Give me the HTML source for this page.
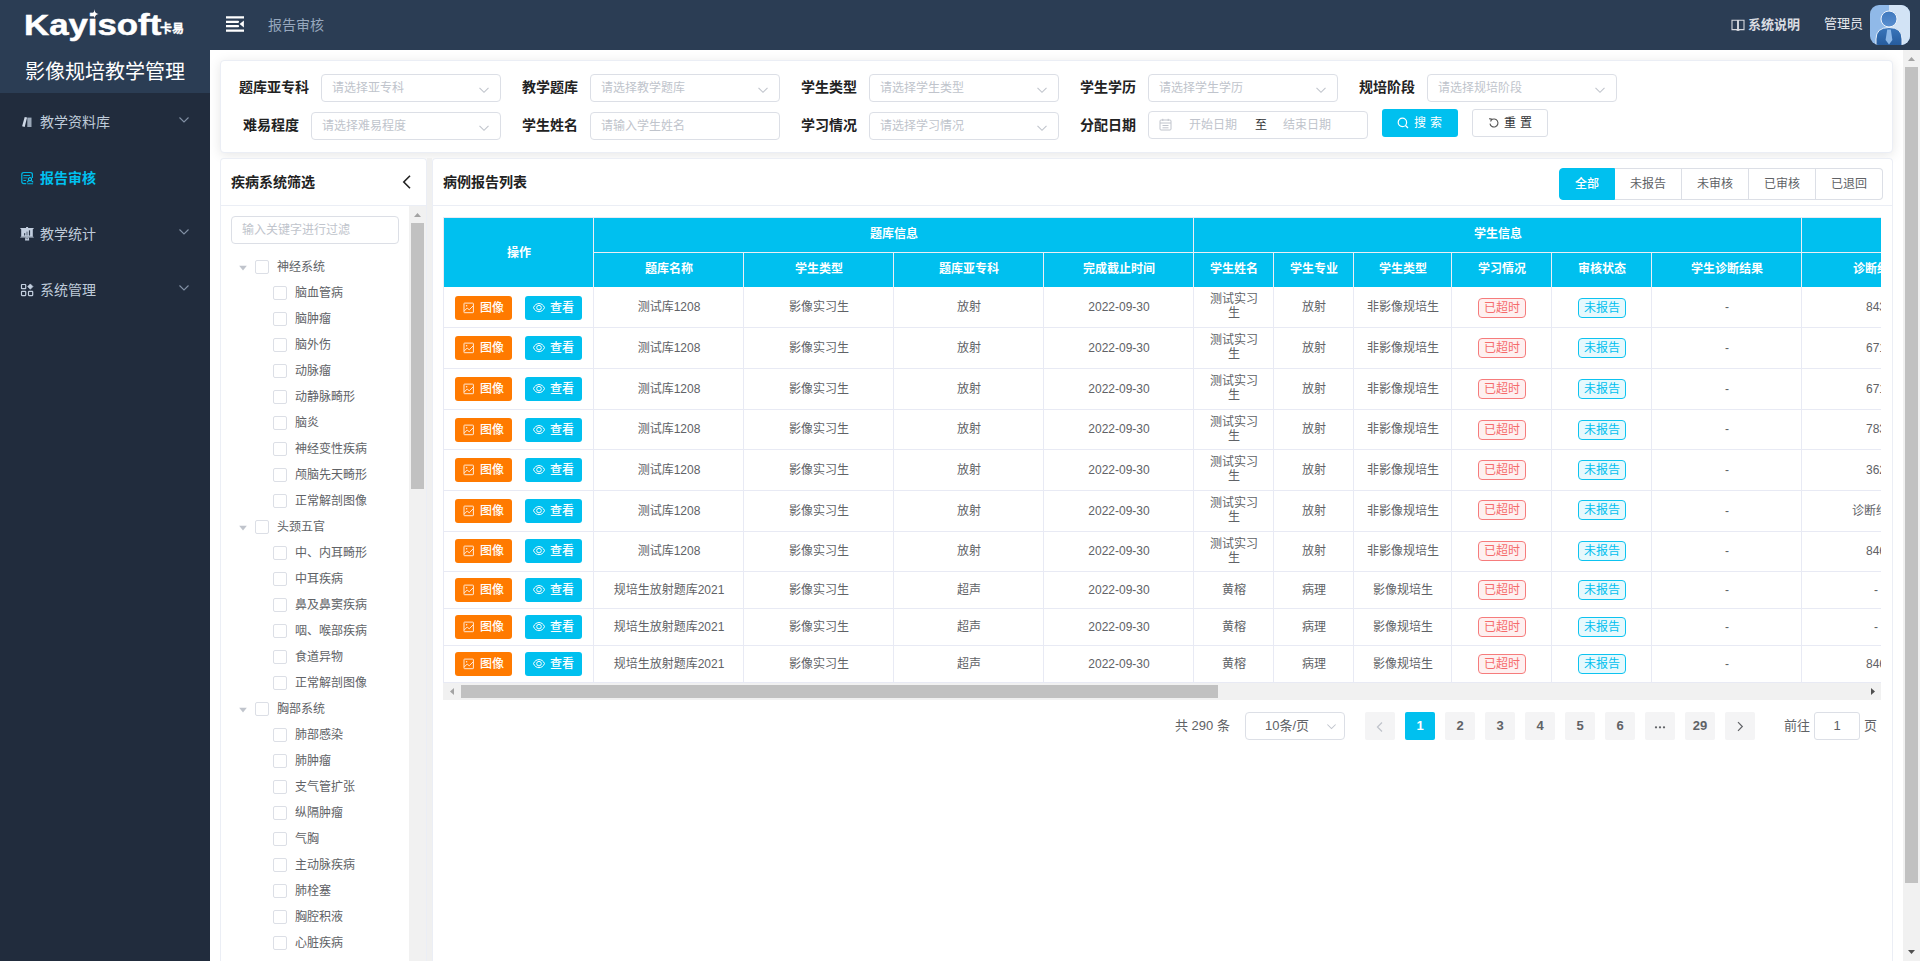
<!DOCTYPE html><html lang="zh-CN"><head><meta charset="utf-8"><title>报告审核</title><style>
*{box-sizing:border-box;margin:0;padding:0}
html,body{width:1920px;height:961px;overflow:hidden;background:#fff}
body{font-family:"Liberation Sans","Noto Sans CJK SC",sans-serif;font-size:12px;color:#606266;position:relative;-webkit-font-smoothing:antialiased}
.abs{position:absolute}
#sidebar{position:absolute;left:0;top:0;width:210px;height:961px;background:#212c3d}
#logo{position:absolute;left:0;top:0;width:210px;height:93px;background:#2b3d54}
#logo .brand{position:absolute;left:24px;top:7px;font-weight:bold;font-size:30px;line-height:36px;color:#fff;white-space:nowrap;transform:scaleX(1.16);transform-origin:0 50%;-webkit-text-stroke:.5px #fff;font-style:normal}
#logo .cn{position:absolute;left:160px;top:20px;font-size:12px;line-height:18px;font-weight:bold;color:#fff;white-space:nowrap;-webkit-text-stroke:.3px #fff}
#logo .star{position:absolute;left:89.5px;top:9px;width:9px;height:10px}
#logo .title{position:absolute;left:25px;top:57px;font-size:20px;line-height:30px;color:#fff;white-space:nowrap;letter-spacing:0}
.mi{position:absolute;left:0;width:210px;height:56px;line-height:56px;color:#bfcbd9;font-size:14px}
.mi .ic{position:absolute;left:20px;top:21px;width:14px;height:14px;line-height:0;display:block}
.mi .ic svg{display:block}
.mi .tx{position:absolute;left:40px;top:0;white-space:nowrap}
.mi .ar{position:absolute;left:178px;top:20px;width:12px;height:12px}
.mi.act{color:#00c0ef;font-weight:bold}
#header{position:absolute;left:210px;top:0;width:1710px;height:50px;background:#2b3d54}
#main{position:absolute;left:210px;top:50px;width:1693px;height:911px;background:#fff;overflow:hidden}
.card{position:absolute;background:#fff;border:1px solid #ebeef5;border-radius:4px;box-shadow:0 2px 12px 0 rgba(0,0,0,.1)}
.card.ns{box-shadow:none}
.lbl{position:absolute;font-size:14px;font-weight:bold;color:#222;line-height:28px;white-space:nowrap}
.sel{position:absolute;height:28px;border:1px solid #dcdfe6;border-radius:4px;background:#fff;font-size:12px;line-height:26px;color:#c0c4cc;padding-left:10px;white-space:nowrap}
.sel svg{position:absolute;right:10px;top:9px;width:12px;height:12px}

.tn{position:absolute;left:0;width:200px;height:26px;line-height:26px;font-size:12px;color:#606266;white-space:nowrap}
.tn span{position:absolute;top:0.6px}
.tn .cb{position:absolute;top:7px;width:14px;height:14px;border:1px solid #dcdfe6;border-radius:2px;background:#fff}
.tn .ca{position:absolute;left:28px;top:10px;width:10px;height:10px}

.rg{position:absolute;left:0;top:118px;height:32px}
.rb{position:absolute;top:0;height:32px;line-height:30px;text-align:center;font-size:12px;color:#606266;background:#fff;border:1px solid #dcdfe6;border-left:none;white-space:nowrap}
.rb.on{background:#00c0ef;border-color:#00c0ef;color:#fff;font-weight:500;border-radius:4px 0 0 4px;border-left:1px solid #00c0ef}
.rb:last-child{border-radius:0 4px 4px 0}
.tbl{position:absolute;overflow:hidden;font-size:12px;color:#606266}
.th-bg{position:absolute;left:1px;top:1px;width:1500px;height:69px;background:#00c0ef}
.hc{position:absolute;text-align:center;color:#fff;font-weight:bold;font-size:12px;white-space:nowrap;overflow:hidden}
.hl{position:absolute;background:#ebeef5}
.vl{position:absolute;width:1px;background:#e8eaf4}
.tr{position:absolute;left:0;width:1600px;border-bottom:1px solid #e8eaf4}
.td{position:absolute;top:-0.4px;text-align:center;white-space:nowrap;overflow:hidden}
.tr.s .td{top:0}
.td.two{line-height:14.6px!important;padding-top:5.1px;white-space:normal}
.bt{position:absolute;width:57px;height:24px;border-radius:3px;color:#fff;line-height:24px;font-size:12px;white-space:nowrap}
.bt svg{position:absolute;left:8px;top:6px;width:12px;height:12px}
.bt span{position:absolute;left:25px;top:0;font-weight:500}
.bt.o{background:#ff7a00}
.bt.b{background:#00c0ef}
.tg{position:absolute;width:48px;height:20px;line-height:18px;text-align:center;border:1px solid;border-radius:4px;font-size:12px;white-space:nowrap}
.tg.d{color:#f56c6c;border-color:#f67c7c;background:#fef0f0}
.tg.p{color:#00c0ef;border-color:#0dc3f0;background:#e6f9fd}
.pb{position:absolute;top:662px;width:30px;height:28px;line-height:28px;text-align:center;background:#f4f4f5;border-radius:2px;color:#606266;font-weight:bold;font-size:13px}
.pb.on{background:#00c0ef;color:#fff}
.pb svg{vertical-align:middle;position:relative;top:0.2px}
</style></head><body>
<div id="sidebar"><div id="logo"><div class="brand">Kayisoft</div><div class="cn">卡易</div><svg class="star" viewBox="0 0 11 13"><path d="M5.5 0 C5.9 4 6.6 5.6 11 6.5 C6.6 7.4 5.9 9 5.5 13 C5.1 9 4.4 7.4 0 6.5 C4.4 5.6 5.1 4 5.5 0 Z" fill="#fff"/></svg><div class="title">影像规培教学管理</div></div>
<div class="mi" style="top:94px"><span class="ic"><svg viewBox="0 0 14 14" width="14" height="14"><path d="M4.7 1.9 L7.1 2.6 L4.7 12 L2.1 11.2 Z" fill="#d0dae8"/><rect x="7.3" y="2.6" width="4.2" height="9.4" fill="#9aa7b8"/></svg></span><span class="tx">教学资料库</span><svg class="ar" viewBox="0 0 12 12"><path d="M1.5 3.5 L6 8 L10.5 3.5" fill="none" stroke="#8391a5" stroke-width="1.1"/></svg></div>
<div class="mi act" style="top:150px"><span class="ic"><svg viewBox="0 0 14 14" width="14" height="14"><path d="M12.4 6.4 V3.6 Q12.4 1.5 10.3 1.5 H3.9 Q1.8 1.5 1.8 3.6 V10.5 Q1.8 12.6 3.9 12.6 H5.8" fill="none" stroke="#00b4e0" stroke-width="1.2" stroke-linecap="round"/><path d="M3.8 4.5 H9.6 M3.8 9.5 H5.6" stroke="#00b4e0" stroke-width="1.1" fill="none" stroke-linecap="round"/><path d="M3.8 6.9 H7" stroke="#0a7fa3" stroke-width="1.3" fill="none" stroke-linecap="round"/><circle cx="10" cy="8.2" r="1.6" fill="none" stroke="#00c8f5" stroke-width="1.1"/><path d="M7.4 11 Q7.9 9.6 9.2 9.7 M12.8 11 Q12.3 9.6 10.8 9.7" fill="none" stroke="#00c8f5" stroke-width="1.1" stroke-linecap="round"/><path d="M7.8 12.7 H12.6" stroke="#00b4e0" stroke-width="1.1" stroke-linecap="round"/></svg></span><span class="tx">报告审核</span></div>
<div class="mi" style="top:206px"><span class="ic"><svg viewBox="0 0 14 14" width="14" height="14"><rect x="6" y="-0.2" width="2.2" height="1.6" rx=".8" fill="#c3cfdf"/><path d="M0 1 H14 L13 2.2 H1 Z" fill="#c3cfdf"/><rect x="1.2" y="1.6" width="11.6" height="8" fill="#c3cfdf"/><path d="M1 9.4 H13 L14 10.6 H0 Z" fill="#c3cfdf"/><rect x="4" y="6" width="1.2" height="2.4" rx=".5" fill="#3a475a"/><rect x="6.4" y="4.6" width="1.2" height="3.8" rx=".5" fill="#6b788b"/><rect x="8.9" y="3.2" width="1.2" height="5.2" rx=".5" fill="#2a3647"/><path d="M5.4 10.6 H8.8 L9.2 13.6 H5 Z" fill="#c3cfdf"/><path d="M6.2 11.3 H8 L7.1 12.6 Z" fill="#3a475a"/></svg></span><span class="tx">教学统计</span><svg class="ar" viewBox="0 0 12 12"><path d="M1.5 3.5 L6 8 L10.5 3.5" fill="none" stroke="#8391a5" stroke-width="1.1"/></svg></div>
<div class="mi" style="top:262px"><span class="ic"><svg viewBox="0 0 14 14" width="14" height="14"><rect x="1.5" y="1.5" width="4.2" height="4.2" rx=".5" fill="none" stroke="#c3cfdf" stroke-width="1.2"/><rect x="1.5" y="8.4" width="4.2" height="4.2" rx=".5" fill="none" stroke="#c3cfdf" stroke-width="1.2"/><rect x="8.5" y="8.4" width="4.2" height="4.2" rx=".5" fill="none" stroke="#c3cfdf" stroke-width="1.2"/><path d="M10.3 0.9 L13 3.6 L10.3 6.3 L7.6 3.6 Z" fill="#c3cfdf" stroke="#c3cfdf" stroke-width=".6" stroke-linejoin="round"/></svg></span><span class="tx">系统管理</span><svg class="ar" viewBox="0 0 12 12"><path d="M1.5 3.5 L6 8 L10.5 3.5" fill="none" stroke="#8391a5" stroke-width="1.1"/></svg></div>
</div>
<div id="header"><svg class="abs" style="left:16px;top:16px" width="18" height="16" viewBox="0 0 18 16"><path d="M0.3 1.4 H17.9 M0.3 5.8 H12 M0.3 10.2 H12 M0.3 14.6 H17.9" stroke="#fff" stroke-width="2.2" fill="none" stroke-linecap="round"/><path d="M17.9 4.6 L13.6 8 L17.9 11.4 Z" fill="#fff"/></svg><div class="abs" style="left:58px;top:0;line-height:50px;font-size:14px;color:#97a8be;white-space:nowrap">报告审核</div><svg class="abs" style="left:1521px;top:18px" width="14" height="14" viewBox="0 0 14 14"><path d="M1 2.2 H6.6 V11.6 H1 Z M7.4 2.2 H13 V11.6 H7.4 Z" fill="none" stroke="#d6d9de" stroke-width="1.1"/><path d="M5.6 12.4 H8.4" stroke="#d6d9de" stroke-width="1"/></svg><div class="abs" style="left:1538px;top:0;line-height:50px;font-size:13px;font-weight:bold;color:#d9dce1;white-space:nowrap">系统说明</div><div class="abs" style="left:1614px;top:0;line-height:48px;font-size:13px;color:#e8eaee;white-space:nowrap">管理员</div><svg class="abs" style="left:1660px;top:5px" width="40" height="40" viewBox="0 0 40 40"><defs><clipPath id="avc"><rect x="0" y="0" width="40" height="40" rx="9" ry="9"/></clipPath><linearGradient id="avh" x1="0" y1="0" x2="0" y2="1"><stop offset="0" stop-color="#3f78bd"/><stop offset="1" stop-color="#5a8fd0"/></linearGradient><linearGradient id="avb" x1="0" y1="0" x2="0" y2="1"><stop offset="0" stop-color="#3a76bb"/><stop offset="1" stop-color="#255a9c"/></linearGradient></defs><g clip-path="url(#avc)"><rect width="40" height="40" fill="#90b9e8"/><rect x="19" width="21" height="40" fill="#d2e3f5"/><path d="M6 41 V34 Q6 22.5 19 22.5 Q32 22.5 32 34 V41 Z" fill="url(#avb)" stroke="#e8f0fa" stroke-width="1"/><path d="M17.2 24.5 H20.8 L22.4 35 L19 39.5 L15.6 35 Z" fill="#8db8e8"/><circle cx="19" cy="14" r="8" fill="url(#avh)" stroke="#eef4fb" stroke-width="1"/></g></svg></div>
<div id="main"><div class="card" style="left:10px;top:10px;width:1673px;height:93px"></div><div class="lbl" style="left:29px;top:23px">题库亚专科</div><div class="sel" style="left:111px;top:24px;width:180px">请选择亚专科<svg viewBox="0 0 12 12"><path d="M1.5 3.8 L6 8.3 L10.5 3.8" fill="none" stroke="#c0c4cc" stroke-width="1.1"/></svg></div><div class="lbl" style="left:312px;top:23px">教学题库</div><div class="sel" style="left:380px;top:24px;width:190px">请选择教学题库<svg viewBox="0 0 12 12"><path d="M1.5 3.8 L6 8.3 L10.5 3.8" fill="none" stroke="#c0c4cc" stroke-width="1.1"/></svg></div><div class="lbl" style="left:591px;top:23px">学生类型</div><div class="sel" style="left:659px;top:24px;width:190px">请选择学生类型<svg viewBox="0 0 12 12"><path d="M1.5 3.8 L6 8.3 L10.5 3.8" fill="none" stroke="#c0c4cc" stroke-width="1.1"/></svg></div><div class="lbl" style="left:870px;top:23px">学生学历</div><div class="sel" style="left:938px;top:24px;width:190px">请选择学生学历<svg viewBox="0 0 12 12"><path d="M1.5 3.8 L6 8.3 L10.5 3.8" fill="none" stroke="#c0c4cc" stroke-width="1.1"/></svg></div><div class="lbl" style="left:1149px;top:23px">规培阶段</div><div class="sel" style="left:1217px;top:24px;width:190px">请选择规培阶段<svg viewBox="0 0 12 12"><path d="M1.5 3.8 L6 8.3 L10.5 3.8" fill="none" stroke="#c0c4cc" stroke-width="1.1"/></svg></div><div class="lbl" style="left:33px;top:61px">难易程度</div><div class="sel" style="left:101px;top:62px;width:190px">请选择难易程度<svg viewBox="0 0 12 12"><path d="M1.5 3.8 L6 8.3 L10.5 3.8" fill="none" stroke="#c0c4cc" stroke-width="1.1"/></svg></div><div class="lbl" style="left:312px;top:61px">学生姓名</div><div class="sel" style="left:380px;top:62px;width:190px">请输入学生姓名</div><div class="lbl" style="left:591px;top:61px">学习情况</div><div class="sel" style="left:659px;top:62px;width:190px">请选择学习情况<svg viewBox="0 0 12 12"><path d="M1.5 3.8 L6 8.3 L10.5 3.8" fill="none" stroke="#c0c4cc" stroke-width="1.1"/></svg></div><div class="lbl" style="left:870px;top:61px">分配日期</div><div class="sel" style="left:938px;top:61px;width:220px;padding-left:0"><svg style="left:10px;top:6px;right:auto;width:13px;height:13px" viewBox="0 0 13 13"><rect x="1" y="2" width="11" height="10" rx="1" fill="none" stroke="#c0c4cc" stroke-width="1"/><path d="M1 5 H12 M3.8 0.8 V3 M9.2 0.8 V3 M3.5 7.5 H9.5 M3.5 9.8 H9.5" stroke="#c0c4cc" stroke-width="1" fill="none"/></svg><span class="abs" style="left:40px;top:0">开始日期</span><span class="abs" style="left:106px;top:0;color:#303133">至</span><span class="abs" style="left:134px;top:0">结束日期</span></div><div class="abs" style="left:1172px;top:59px;width:76px;height:28px;background:#00c0ef;border-radius:3px;color:#fff;font-size:12px;line-height:28px;white-space:nowrap"><svg class="abs" style="left:15px;top:8px" width="12" height="12" viewBox="0 0 12 12"><circle cx="5.4" cy="5.4" r="4.2" fill="none" stroke="#fff" stroke-width="1.2"/><path d="M8.5 8.5 L11 11" stroke="#fff" stroke-width="1.2"/></svg><span class="abs" style="left:32px;top:0;letter-spacing:4px">搜索</span></div><div class="abs" style="left:1262px;top:59px;width:76px;height:28px;background:#fff;border:1px solid #dcdfe6;border-radius:3px;color:#303133;font-size:12px;line-height:26px;white-space:nowrap"><svg class="abs" style="left:15px;top:7px" width="12" height="12" viewBox="0 0 12 12"><path d="M3.1 3.2 A4 4 0 1 1 2 6.6" fill="none" stroke="#555" stroke-width="1.1"/><path d="M1.2 1.6 L3.6 2.2 L2.6 4.4" fill="none" stroke="#555" stroke-width="1.1"/></svg><span class="abs" style="left:31px;top:0;letter-spacing:4px">重置</span></div><div class="abs" style="left:217px;top:108px;width:5px;height:820px;background:#f0f0f0"></div><div class="card ns" style="left:10px;top:108px;width:207px;height:820px;border-bottom:none;border-radius:4px 4px 0 0"></div><div class="abs" style="left:21px;top:109px;line-height:46px;font-size:14px;font-weight:bold;color:#222;white-space:nowrap">疾病系统筛选</div><svg class="abs" style="left:190px;top:124px" width="14" height="16" viewBox="0 0 14 16"><path d="M10 1.8 L3.8 8 L10 14.2" fill="none" stroke="#222" stroke-width="1.6"/></svg><div class="abs" style="left:10px;top:155px;width:207px;height:1px;background:#ebeef5"></div><div class="sel" style="left:21px;top:166px;width:168px">输入关键字进行过滤</div><div class="tree"><div class="tn" style="top:203px"><svg class="ca" viewBox="0 0 10 10"><path d="M1.2 2.8 H8.8 L5 7.6 Z" fill="#c0c4cc"/></svg><i class="cb" style="left:45px"></i><span style="left:67px">神经系统</span></div><div class="tn" style="top:229px"><i class="cb" style="left:63px"></i><span style="left:85px">脑血管病</span></div><div class="tn" style="top:255px"><i class="cb" style="left:63px"></i><span style="left:85px">脑肿瘤</span></div><div class="tn" style="top:281px"><i class="cb" style="left:63px"></i><span style="left:85px">脑外伤</span></div><div class="tn" style="top:307px"><i class="cb" style="left:63px"></i><span style="left:85px">动脉瘤</span></div><div class="tn" style="top:333px"><i class="cb" style="left:63px"></i><span style="left:85px">动静脉畸形</span></div><div class="tn" style="top:359px"><i class="cb" style="left:63px"></i><span style="left:85px">脑炎</span></div><div class="tn" style="top:385px"><i class="cb" style="left:63px"></i><span style="left:85px">神经变性疾病</span></div><div class="tn" style="top:411px"><i class="cb" style="left:63px"></i><span style="left:85px">颅脑先天畸形</span></div><div class="tn" style="top:437px"><i class="cb" style="left:63px"></i><span style="left:85px">正常解剖图像</span></div><div class="tn" style="top:463px"><svg class="ca" viewBox="0 0 10 10"><path d="M1.2 2.8 H8.8 L5 7.6 Z" fill="#c0c4cc"/></svg><i class="cb" style="left:45px"></i><span style="left:67px">头颈五官</span></div><div class="tn" style="top:489px"><i class="cb" style="left:63px"></i><span style="left:85px">中、内耳畸形</span></div><div class="tn" style="top:515px"><i class="cb" style="left:63px"></i><span style="left:85px">中耳疾病</span></div><div class="tn" style="top:541px"><i class="cb" style="left:63px"></i><span style="left:85px">鼻及鼻窦疾病</span></div><div class="tn" style="top:567px"><i class="cb" style="left:63px"></i><span style="left:85px">咽、喉部疾病</span></div><div class="tn" style="top:593px"><i class="cb" style="left:63px"></i><span style="left:85px">食道异物</span></div><div class="tn" style="top:619px"><i class="cb" style="left:63px"></i><span style="left:85px">正常解剖图像</span></div><div class="tn" style="top:645px"><svg class="ca" viewBox="0 0 10 10"><path d="M1.2 2.8 H8.8 L5 7.6 Z" fill="#c0c4cc"/></svg><i class="cb" style="left:45px"></i><span style="left:67px">胸部系统</span></div><div class="tn" style="top:671px"><i class="cb" style="left:63px"></i><span style="left:85px">肺部感染</span></div><div class="tn" style="top:697px"><i class="cb" style="left:63px"></i><span style="left:85px">肺肿瘤</span></div><div class="tn" style="top:723px"><i class="cb" style="left:63px"></i><span style="left:85px">支气管扩张</span></div><div class="tn" style="top:749px"><i class="cb" style="left:63px"></i><span style="left:85px">纵隔肿瘤</span></div><div class="tn" style="top:775px"><i class="cb" style="left:63px"></i><span style="left:85px">气胸</span></div><div class="tn" style="top:801px"><i class="cb" style="left:63px"></i><span style="left:85px">主动脉疾病</span></div><div class="tn" style="top:827px"><i class="cb" style="left:63px"></i><span style="left:85px">肺栓塞</span></div><div class="tn" style="top:853px"><i class="cb" style="left:63px"></i><span style="left:85px">胸腔积液</span></div><div class="tn" style="top:879px"><i class="cb" style="left:63px"></i><span style="left:85px">心脏疾病</span></div></div><div class="abs" style="left:199px;top:156px;width:17px;height:760px;background:#f1f1f1"></div><div class="abs" style="left:201px;top:173px;width:13px;height:266px;background:#c1c1c1"></div><svg class="abs" style="left:203px;top:162px" width="9" height="6" viewBox="0 0 9 6"><path d="M4.5 1 L8 5 H1 Z" fill="#a3a3a3"/></svg><div class="card ns" style="left:222px;top:108px;width:1461px;height:820px;border-bottom:none;border-radius:4px 4px 0 0"></div><div class="abs" style="left:233px;top:109px;line-height:46px;font-size:14px;font-weight:bold;color:#222;white-space:nowrap">病例报告列表</div><div class="abs" style="left:222px;top:155px;width:1461px;height:1px;background:#ebeef5"></div><div class="rg"><div class="rb on" style="left:1349px;width:56px">全部</div><div class="rb" style="left:1405px;width:67px">未报告</div><div class="rb" style="left:1472px;width:67px">未审核</div><div class="rb" style="left:1539px;width:67px">已审核</div><div class="rb" style="left:1606px;width:67px">已退回</div></div><div class="tbl" style="left:233px;top:167px;width:1438px;height:483px"><div class="th-bg"></div><div class="hc" style="left:1px;top:2.5px;width:150px;height:69px;line-height:67px">操作</div><div class="hc" style="left:151px;top:1px;width:600px;height:35px;line-height:33px">题库信息</div><div class="hc" style="left:751px;top:1px;width:608px;height:35px;line-height:33px">学生信息</div><div class="hc" style="left:1359px;top:1px;width:600px;height:35px;line-height:33px">诊断信息</div><div class="hc" style="left:151px;top:36px;width:150px;height:34px;line-height:32px">题库名称</div><div class="hc" style="left:301px;top:36px;width:150px;height:34px;line-height:32px">学生类型</div><div class="hc" style="left:451px;top:36px;width:150px;height:34px;line-height:32px">题库亚专科</div><div class="hc" style="left:601px;top:36px;width:150px;height:34px;line-height:32px">完成截止时间</div><div class="hc" style="left:751px;top:36px;width:80px;height:34px;line-height:32px">学生姓名</div><div class="hc" style="left:831px;top:36px;width:80px;height:34px;line-height:32px">学生专业</div><div class="hc" style="left:911px;top:36px;width:98px;height:34px;line-height:32px">学生类型</div><div class="hc" style="left:1009px;top:36px;width:100px;height:34px;line-height:32px">学习情况</div><div class="hc" style="left:1109px;top:36px;width:100px;height:34px;line-height:32px">审核状态</div><div class="hc" style="left:1209px;top:36px;width:150px;height:34px;line-height:32px">学生诊断结果</div><div class="hc" style="left:1359px;top:36px;width:150px;height:34px;line-height:32px">诊断结果</div><div class="hl" style="left:151px;top:35px;width:1300px;height:1px"></div><div class="hl" style="left:150px;top:1px;width:1px;height:69px"></div><div class="hl" style="left:750px;top:1px;width:1px;height:69px"></div><div class="hl" style="left:1358px;top:1px;width:1px;height:69px"></div><div class="hl" style="left:300px;top:36px;width:1px;height:34px"></div><div class="hl" style="left:450px;top:36px;width:1px;height:34px"></div><div class="hl" style="left:600px;top:36px;width:1px;height:34px"></div><div class="hl" style="left:830px;top:36px;width:1px;height:34px"></div><div class="hl" style="left:910px;top:36px;width:1px;height:34px"></div><div class="hl" style="left:1008px;top:36px;width:1px;height:34px"></div><div class="hl" style="left:1108px;top:36px;width:1px;height:34px"></div><div class="hl" style="left:1208px;top:36px;width:1px;height:34px"></div><div class="tr" style="top:70px;height:41px"><div class="bt o" style="left:12px;top:9px"><svg viewBox="0 0 12 12"><rect x="1" y="1.1" width="9.4" height="9.6" rx=".5" fill="none" stroke="#ffe9d6" stroke-width="1"/><circle cx="3.6" cy="3.8" r=".8" fill="#ffe9d6"/><path d="M1.2 9 L4.2 6 L6.2 7.8 L10.2 3.8" fill="none" stroke="#ffe9d6" stroke-width="1"/></svg><span>图像</span></div><div class="bt b" style="left:82px;top:9px"><svg viewBox="0 0 12 12"><path d="M0.5 5.6 C2.6 0.2 9.4 0.2 11.5 5.6 C9.4 11 2.6 11 0.5 5.6 Z" fill="none" stroke="#fff" stroke-width="1"/><circle cx="6" cy="5.6" r="2.3" fill="none" stroke="#fff" stroke-width="1"/></svg><span>查看</span></div><span class="tg d" style="left:1035px;top:11px">已超时</span><span class="tg p" style="left:1135px;top:11px">未报告</span><div class="td" style="left:151px;width:150px;height:40px;line-height:40px">测试库1208</div><div class="td" style="left:301px;width:150px;height:40px;line-height:40px">影像实习生</div><div class="td" style="left:451px;width:150px;height:40px;line-height:40px">放射</div><div class="td" style="left:601px;width:150px;height:40px;line-height:40px">2022-09-30</div><div class="td two" style="left:751px;width:80px;height:40px;line-height:40px">测试实习<br>生</div><div class="td" style="left:831px;width:80px;height:40px;line-height:40px">放射</div><div class="td" style="left:911px;width:98px;height:40px;line-height:40px">非影像规培生</div><div class="td" style="left:1209px;width:150px;height:40px;line-height:40px">-</div><div class="td" style="left:1359px;width:150px;height:40px;line-height:40px"><span style="position:relative;left:-1px">843</span></div></div><div class="tr" style="top:111px;height:41px"><div class="bt o" style="left:12px;top:8px"><svg viewBox="0 0 12 12"><rect x="1" y="1.1" width="9.4" height="9.6" rx=".5" fill="none" stroke="#ffe9d6" stroke-width="1"/><circle cx="3.6" cy="3.8" r=".8" fill="#ffe9d6"/><path d="M1.2 9 L4.2 6 L6.2 7.8 L10.2 3.8" fill="none" stroke="#ffe9d6" stroke-width="1"/></svg><span>图像</span></div><div class="bt b" style="left:82px;top:8px"><svg viewBox="0 0 12 12"><path d="M0.5 5.6 C2.6 0.2 9.4 0.2 11.5 5.6 C9.4 11 2.6 11 0.5 5.6 Z" fill="none" stroke="#fff" stroke-width="1"/><circle cx="6" cy="5.6" r="2.3" fill="none" stroke="#fff" stroke-width="1"/></svg><span>查看</span></div><span class="tg d" style="left:1035px;top:10px">已超时</span><span class="tg p" style="left:1135px;top:10px">未报告</span><div class="td" style="left:151px;width:150px;height:40px;line-height:40px">测试库1208</div><div class="td" style="left:301px;width:150px;height:40px;line-height:40px">影像实习生</div><div class="td" style="left:451px;width:150px;height:40px;line-height:40px">放射</div><div class="td" style="left:601px;width:150px;height:40px;line-height:40px">2022-09-30</div><div class="td two" style="left:751px;width:80px;height:40px;line-height:40px">测试实习<br>生</div><div class="td" style="left:831px;width:80px;height:40px;line-height:40px">放射</div><div class="td" style="left:911px;width:98px;height:40px;line-height:40px">非影像规培生</div><div class="td" style="left:1209px;width:150px;height:40px;line-height:40px">-</div><div class="td" style="left:1359px;width:150px;height:40px;line-height:40px"><span style="position:relative;left:-1px">671</span></div></div><div class="tr" style="top:152px;height:41px"><div class="bt o" style="left:12px;top:8px"><svg viewBox="0 0 12 12"><rect x="1" y="1.1" width="9.4" height="9.6" rx=".5" fill="none" stroke="#ffe9d6" stroke-width="1"/><circle cx="3.6" cy="3.8" r=".8" fill="#ffe9d6"/><path d="M1.2 9 L4.2 6 L6.2 7.8 L10.2 3.8" fill="none" stroke="#ffe9d6" stroke-width="1"/></svg><span>图像</span></div><div class="bt b" style="left:82px;top:8px"><svg viewBox="0 0 12 12"><path d="M0.5 5.6 C2.6 0.2 9.4 0.2 11.5 5.6 C9.4 11 2.6 11 0.5 5.6 Z" fill="none" stroke="#fff" stroke-width="1"/><circle cx="6" cy="5.6" r="2.3" fill="none" stroke="#fff" stroke-width="1"/></svg><span>查看</span></div><span class="tg d" style="left:1035px;top:10px">已超时</span><span class="tg p" style="left:1135px;top:10px">未报告</span><div class="td" style="left:151px;width:150px;height:40px;line-height:40px">测试库1208</div><div class="td" style="left:301px;width:150px;height:40px;line-height:40px">影像实习生</div><div class="td" style="left:451px;width:150px;height:40px;line-height:40px">放射</div><div class="td" style="left:601px;width:150px;height:40px;line-height:40px">2022-09-30</div><div class="td two" style="left:751px;width:80px;height:40px;line-height:40px">测试实习<br>生</div><div class="td" style="left:831px;width:80px;height:40px;line-height:40px">放射</div><div class="td" style="left:911px;width:98px;height:40px;line-height:40px">非影像规培生</div><div class="td" style="left:1209px;width:150px;height:40px;line-height:40px">-</div><div class="td" style="left:1359px;width:150px;height:40px;line-height:40px"><span style="position:relative;left:-1px">671</span></div></div><div class="tr" style="top:193px;height:40px"><div class="bt o" style="left:12px;top:8px"><svg viewBox="0 0 12 12"><rect x="1" y="1.1" width="9.4" height="9.6" rx=".5" fill="none" stroke="#ffe9d6" stroke-width="1"/><circle cx="3.6" cy="3.8" r=".8" fill="#ffe9d6"/><path d="M1.2 9 L4.2 6 L6.2 7.8 L10.2 3.8" fill="none" stroke="#ffe9d6" stroke-width="1"/></svg><span>图像</span></div><div class="bt b" style="left:82px;top:8px"><svg viewBox="0 0 12 12"><path d="M0.5 5.6 C2.6 0.2 9.4 0.2 11.5 5.6 C9.4 11 2.6 11 0.5 5.6 Z" fill="none" stroke="#fff" stroke-width="1"/><circle cx="6" cy="5.6" r="2.3" fill="none" stroke="#fff" stroke-width="1"/></svg><span>查看</span></div><span class="tg d" style="left:1035px;top:10px">已超时</span><span class="tg p" style="left:1135px;top:10px">未报告</span><div class="td" style="left:151px;width:150px;height:39px;line-height:39px">测试库1208</div><div class="td" style="left:301px;width:150px;height:39px;line-height:39px">影像实习生</div><div class="td" style="left:451px;width:150px;height:39px;line-height:39px">放射</div><div class="td" style="left:601px;width:150px;height:39px;line-height:39px">2022-09-30</div><div class="td two" style="left:751px;width:80px;height:39px;line-height:39px">测试实习<br>生</div><div class="td" style="left:831px;width:80px;height:39px;line-height:39px">放射</div><div class="td" style="left:911px;width:98px;height:39px;line-height:39px">非影像规培生</div><div class="td" style="left:1209px;width:150px;height:39px;line-height:39px">-</div><div class="td" style="left:1359px;width:150px;height:39px;line-height:39px"><span style="position:relative;left:-1px">783</span></div></div><div class="tr" style="top:233px;height:41px"><div class="bt o" style="left:12px;top:8px"><svg viewBox="0 0 12 12"><rect x="1" y="1.1" width="9.4" height="9.6" rx=".5" fill="none" stroke="#ffe9d6" stroke-width="1"/><circle cx="3.6" cy="3.8" r=".8" fill="#ffe9d6"/><path d="M1.2 9 L4.2 6 L6.2 7.8 L10.2 3.8" fill="none" stroke="#ffe9d6" stroke-width="1"/></svg><span>图像</span></div><div class="bt b" style="left:82px;top:8px"><svg viewBox="0 0 12 12"><path d="M0.5 5.6 C2.6 0.2 9.4 0.2 11.5 5.6 C9.4 11 2.6 11 0.5 5.6 Z" fill="none" stroke="#fff" stroke-width="1"/><circle cx="6" cy="5.6" r="2.3" fill="none" stroke="#fff" stroke-width="1"/></svg><span>查看</span></div><span class="tg d" style="left:1035px;top:10px">已超时</span><span class="tg p" style="left:1135px;top:10px">未报告</span><div class="td" style="left:151px;width:150px;height:40px;line-height:40px">测试库1208</div><div class="td" style="left:301px;width:150px;height:40px;line-height:40px">影像实习生</div><div class="td" style="left:451px;width:150px;height:40px;line-height:40px">放射</div><div class="td" style="left:601px;width:150px;height:40px;line-height:40px">2022-09-30</div><div class="td two" style="left:751px;width:80px;height:40px;line-height:40px">测试实习<br>生</div><div class="td" style="left:831px;width:80px;height:40px;line-height:40px">放射</div><div class="td" style="left:911px;width:98px;height:40px;line-height:40px">非影像规培生</div><div class="td" style="left:1209px;width:150px;height:40px;line-height:40px">-</div><div class="td" style="left:1359px;width:150px;height:40px;line-height:40px"><span style="position:relative;left:-1px">362</span></div></div><div class="tr" style="top:274px;height:41px"><div class="bt o" style="left:12px;top:8px"><svg viewBox="0 0 12 12"><rect x="1" y="1.1" width="9.4" height="9.6" rx=".5" fill="none" stroke="#ffe9d6" stroke-width="1"/><circle cx="3.6" cy="3.8" r=".8" fill="#ffe9d6"/><path d="M1.2 9 L4.2 6 L6.2 7.8 L10.2 3.8" fill="none" stroke="#ffe9d6" stroke-width="1"/></svg><span>图像</span></div><div class="bt b" style="left:82px;top:8px"><svg viewBox="0 0 12 12"><path d="M0.5 5.6 C2.6 0.2 9.4 0.2 11.5 5.6 C9.4 11 2.6 11 0.5 5.6 Z" fill="none" stroke="#fff" stroke-width="1"/><circle cx="6" cy="5.6" r="2.3" fill="none" stroke="#fff" stroke-width="1"/></svg><span>查看</span></div><span class="tg d" style="left:1035px;top:9px">已超时</span><span class="tg p" style="left:1135px;top:9px">未报告</span><div class="td" style="left:151px;width:150px;height:40px;line-height:40px">测试库1208</div><div class="td" style="left:301px;width:150px;height:40px;line-height:40px">影像实习生</div><div class="td" style="left:451px;width:150px;height:40px;line-height:40px">放射</div><div class="td" style="left:601px;width:150px;height:40px;line-height:40px">2022-09-30</div><div class="td two" style="left:751px;width:80px;height:40px;line-height:40px">测试实习<br>生</div><div class="td" style="left:831px;width:80px;height:40px;line-height:40px">放射</div><div class="td" style="left:911px;width:98px;height:40px;line-height:40px">非影像规培生</div><div class="td" style="left:1209px;width:150px;height:40px;line-height:40px">-</div><div class="td" style="left:1359px;width:150px;height:40px;line-height:40px"><span style="position:relative;left:-1px">诊断结果</span></div></div><div class="tr" style="top:315px;height:40px"><div class="bt o" style="left:12px;top:7px"><svg viewBox="0 0 12 12"><rect x="1" y="1.1" width="9.4" height="9.6" rx=".5" fill="none" stroke="#ffe9d6" stroke-width="1"/><circle cx="3.6" cy="3.8" r=".8" fill="#ffe9d6"/><path d="M1.2 9 L4.2 6 L6.2 7.8 L10.2 3.8" fill="none" stroke="#ffe9d6" stroke-width="1"/></svg><span>图像</span></div><div class="bt b" style="left:82px;top:7px"><svg viewBox="0 0 12 12"><path d="M0.5 5.6 C2.6 0.2 9.4 0.2 11.5 5.6 C9.4 11 2.6 11 0.5 5.6 Z" fill="none" stroke="#fff" stroke-width="1"/><circle cx="6" cy="5.6" r="2.3" fill="none" stroke="#fff" stroke-width="1"/></svg><span>查看</span></div><span class="tg d" style="left:1035px;top:9px">已超时</span><span class="tg p" style="left:1135px;top:9px">未报告</span><div class="td" style="left:151px;width:150px;height:39px;line-height:39px">测试库1208</div><div class="td" style="left:301px;width:150px;height:39px;line-height:39px">影像实习生</div><div class="td" style="left:451px;width:150px;height:39px;line-height:39px">放射</div><div class="td" style="left:601px;width:150px;height:39px;line-height:39px">2022-09-30</div><div class="td two" style="left:751px;width:80px;height:39px;line-height:39px">测试实习<br>生</div><div class="td" style="left:831px;width:80px;height:39px;line-height:39px">放射</div><div class="td" style="left:911px;width:98px;height:39px;line-height:39px">非影像规培生</div><div class="td" style="left:1209px;width:150px;height:39px;line-height:39px">-</div><div class="td" style="left:1359px;width:150px;height:39px;line-height:39px"><span style="position:relative;left:-1px">846</span></div></div><div class="tr s" style="top:355px;height:37px"><div class="bt o" style="left:12px;top:6px"><svg viewBox="0 0 12 12"><rect x="1" y="1.1" width="9.4" height="9.6" rx=".5" fill="none" stroke="#ffe9d6" stroke-width="1"/><circle cx="3.6" cy="3.8" r=".8" fill="#ffe9d6"/><path d="M1.2 9 L4.2 6 L6.2 7.8 L10.2 3.8" fill="none" stroke="#ffe9d6" stroke-width="1"/></svg><span>图像</span></div><div class="bt b" style="left:82px;top:6px"><svg viewBox="0 0 12 12"><path d="M0.5 5.6 C2.6 0.2 9.4 0.2 11.5 5.6 C9.4 11 2.6 11 0.5 5.6 Z" fill="none" stroke="#fff" stroke-width="1"/><circle cx="6" cy="5.6" r="2.3" fill="none" stroke="#fff" stroke-width="1"/></svg><span>查看</span></div><span class="tg d" style="left:1035px;top:8px">已超时</span><span class="tg p" style="left:1135px;top:8px">未报告</span><div class="td" style="left:151px;width:150px;height:36px;line-height:36px">规培生放射题库2021</div><div class="td" style="left:301px;width:150px;height:36px;line-height:36px">影像实习生</div><div class="td" style="left:451px;width:150px;height:36px;line-height:36px">超声</div><div class="td" style="left:601px;width:150px;height:36px;line-height:36px">2022-09-30</div><div class="td" style="left:751px;width:80px;height:36px;line-height:36px">黄榕</div><div class="td" style="left:831px;width:80px;height:36px;line-height:36px">病理</div><div class="td" style="left:911px;width:98px;height:36px;line-height:36px">影像规培生</div><div class="td" style="left:1209px;width:150px;height:36px;line-height:36px">-</div><div class="td" style="left:1359px;width:150px;height:36px;line-height:36px"><span style="position:relative;left:-1px">-</span></div></div><div class="tr s" style="top:392px;height:37px"><div class="bt o" style="left:12px;top:6px"><svg viewBox="0 0 12 12"><rect x="1" y="1.1" width="9.4" height="9.6" rx=".5" fill="none" stroke="#ffe9d6" stroke-width="1"/><circle cx="3.6" cy="3.8" r=".8" fill="#ffe9d6"/><path d="M1.2 9 L4.2 6 L6.2 7.8 L10.2 3.8" fill="none" stroke="#ffe9d6" stroke-width="1"/></svg><span>图像</span></div><div class="bt b" style="left:82px;top:6px"><svg viewBox="0 0 12 12"><path d="M0.5 5.6 C2.6 0.2 9.4 0.2 11.5 5.6 C9.4 11 2.6 11 0.5 5.6 Z" fill="none" stroke="#fff" stroke-width="1"/><circle cx="6" cy="5.6" r="2.3" fill="none" stroke="#fff" stroke-width="1"/></svg><span>查看</span></div><span class="tg d" style="left:1035px;top:8px">已超时</span><span class="tg p" style="left:1135px;top:8px">未报告</span><div class="td" style="left:151px;width:150px;height:36px;line-height:36px">规培生放射题库2021</div><div class="td" style="left:301px;width:150px;height:36px;line-height:36px">影像实习生</div><div class="td" style="left:451px;width:150px;height:36px;line-height:36px">超声</div><div class="td" style="left:601px;width:150px;height:36px;line-height:36px">2022-09-30</div><div class="td" style="left:751px;width:80px;height:36px;line-height:36px">黄榕</div><div class="td" style="left:831px;width:80px;height:36px;line-height:36px">病理</div><div class="td" style="left:911px;width:98px;height:36px;line-height:36px">影像规培生</div><div class="td" style="left:1209px;width:150px;height:36px;line-height:36px">-</div><div class="td" style="left:1359px;width:150px;height:36px;line-height:36px"><span style="position:relative;left:-1px">-</span></div></div><div class="tr s" style="top:429px;height:37px"><div class="bt o" style="left:12px;top:6px"><svg viewBox="0 0 12 12"><rect x="1" y="1.1" width="9.4" height="9.6" rx=".5" fill="none" stroke="#ffe9d6" stroke-width="1"/><circle cx="3.6" cy="3.8" r=".8" fill="#ffe9d6"/><path d="M1.2 9 L4.2 6 L6.2 7.8 L10.2 3.8" fill="none" stroke="#ffe9d6" stroke-width="1"/></svg><span>图像</span></div><div class="bt b" style="left:82px;top:6px"><svg viewBox="0 0 12 12"><path d="M0.5 5.6 C2.6 0.2 9.4 0.2 11.5 5.6 C9.4 11 2.6 11 0.5 5.6 Z" fill="none" stroke="#fff" stroke-width="1"/><circle cx="6" cy="5.6" r="2.3" fill="none" stroke="#fff" stroke-width="1"/></svg><span>查看</span></div><span class="tg d" style="left:1035px;top:8px">已超时</span><span class="tg p" style="left:1135px;top:8px">未报告</span><div class="td" style="left:151px;width:150px;height:36px;line-height:36px">规培生放射题库2021</div><div class="td" style="left:301px;width:150px;height:36px;line-height:36px">影像实习生</div><div class="td" style="left:451px;width:150px;height:36px;line-height:36px">超声</div><div class="td" style="left:601px;width:150px;height:36px;line-height:36px">2022-09-30</div><div class="td" style="left:751px;width:80px;height:36px;line-height:36px">黄榕</div><div class="td" style="left:831px;width:80px;height:36px;line-height:36px">病理</div><div class="td" style="left:911px;width:98px;height:36px;line-height:36px">影像规培生</div><div class="td" style="left:1209px;width:150px;height:36px;line-height:36px">-</div><div class="td" style="left:1359px;width:150px;height:36px;line-height:36px"><span style="position:relative;left:-1px">846</span></div></div><div class="vl" style="left:150px;top:70px;height:396.0px"></div><div class="vl" style="left:300px;top:70px;height:396.0px"></div><div class="vl" style="left:450px;top:70px;height:396.0px"></div><div class="vl" style="left:600px;top:70px;height:396.0px"></div><div class="vl" style="left:750px;top:70px;height:396.0px"></div><div class="vl" style="left:830px;top:70px;height:396.0px"></div><div class="vl" style="left:910px;top:70px;height:396.0px"></div><div class="vl" style="left:1008px;top:70px;height:396.0px"></div><div class="vl" style="left:1108px;top:70px;height:396.0px"></div><div class="vl" style="left:1208px;top:70px;height:396.0px"></div><div class="vl" style="left:1358px;top:70px;height:396.0px"></div><div class="vl" style="left:0;top:0;height:466.0px"></div><div class="abs" style="left:0;top:0;width:1438px;height:1px;background:#e8eaf4"></div><div class="abs" style="left:0;top:466px;width:1438px;height:17px;background:#f1f1f1"></div><div class="abs" style="left:18px;top:468px;width:757px;height:13px;background:#c1c1c1"></div><svg class="abs" style="left:6px;top:470px" width="6" height="9" viewBox="0 0 6 9"><path d="M1 4.5 L5 1 V8 Z" fill="#a3a3a3"/></svg><svg class="abs" style="left:1427px;top:470px" width="6" height="9" viewBox="0 0 6 9"><path d="M5 4.5 L1 1 V8 Z" fill="#505050"/></svg></div><div class="abs" style="left:965px;top:662px;line-height:28px;font-size:13px;color:#606266;white-space:nowrap">共 290 条</div><div class="sel" style="left:1035px;top:662px;width:100px;color:#606266;font-size:13px;padding-left:19px">10条/页<svg viewBox="0 0 12 12" style="right:7px;top:8px;width:11px;height:11px"><path d="M1.5 3.8 L6 8.3 L10.5 3.8" fill="none" stroke="#c0c4cc" stroke-width="1.1"/></svg></div><div class="pb" style="left:1155px"><svg width="10" height="12" viewBox="0 0 10 12"><path d="M7 1.5 L2.5 6 L7 10.5" fill="none" stroke="#c0c4cc" stroke-width="1.3"/></svg></div><div class="pb on" style="left:1195px">1</div><div class="pb" style="left:1235px">2</div><div class="pb" style="left:1275px">3</div><div class="pb" style="left:1315px">4</div><div class="pb" style="left:1355px">5</div><div class="pb" style="left:1395px">6</div><div class="pb" style="left:1435px"><svg width="12" height="12" viewBox="0 0 12 12"><circle cx="2" cy="6.3" r="1.15" fill="#606266"/><circle cx="6" cy="6.3" r="1.15" fill="#606266"/><circle cx="10" cy="6.3" r="1.15" fill="#606266"/></svg></div><div class="pb" style="left:1475px">29</div><div class="pb" style="left:1515px"><svg width="10" height="12" viewBox="0 0 10 12"><path d="M3 1.2 L7.3 5.5 L3 9.8" fill="none" stroke="#606266" stroke-width="1.2"/></svg></div><div class="abs" style="left:1574px;top:662px;line-height:28px;font-size:13px;color:#606266;white-space:nowrap">前往</div><div class="sel" style="left:1604px;top:662px;width:46px;color:#606266;font-size:13px;padding:0;text-align:center;border-radius:3px">1</div><div class="abs" style="left:1654px;top:662px;line-height:28px;font-size:13px;color:#606266;white-space:nowrap">页</div></div>
<div class="abs" style="left:1903px;top:50px;width:17px;height:911px;background:#f1f1f1"></div><div class="abs" style="left:1905px;top:67px;width:13px;height:816px;background:#c1c1c1"></div><svg class="abs" style="left:1907px;top:56px" width="9" height="6" viewBox="0 0 9 6"><path d="M4.5 1 L8 5 H1 Z" fill="#a3a3a3"/></svg><svg class="abs" style="left:1907px;top:949px" width="9" height="6" viewBox="0 0 9 6"><path d="M4.5 5 L8 1 H1 Z" fill="#505050"/></svg>
</body></html>
